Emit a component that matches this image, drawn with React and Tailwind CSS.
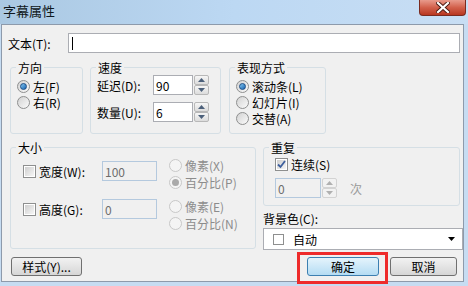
import { useState } from 'react';

const font = "font-['Noto_Sans_CJK_SC',sans-serif]";

function Radio({ checked = false, disabled = false }) {
    return (
        <span
            className={`flex size-[13px] shrink-0 items-center justify-center rounded-full border ${
                disabled
                    ? 'border-[#c8c8c8] bg-[#f4f4f4]'
                    : 'border-[#8e8f8f] bg-gradient-to-br from-[#d2d2d2] to-[#fbfbfb]'
            }`}
        >
            {checked && (
                <span
                    className={`size-[7px] rounded-full ${
                        disabled
                            ? 'bg-[#a9a9a9]'
                            : 'border border-[#1b4c85] bg-gradient-to-br from-[#82c6f0] to-[#1264b0]'
                    }`}
                />
            )}
        </span>
    );
}

function Checkbox({ checked = false }) {
    return (
        <span className="flex size-[13px] shrink-0 items-center justify-center border border-[#8e8f8f] bg-white">
            <span className="relative size-[9px] bg-gradient-to-br from-[#cfcfcf] to-[#f6f6f6]">
                {checked && (
                    <svg viewBox="0 0 9 9" className="absolute inset-0 size-[9px]">
                        <path d="M1 4.5 L3.5 7 L8 1" fill="none" stroke="#3d5f9d" strokeWidth="1.8" />
                    </svg>
                )}
            </span>
        </span>
    );
}

function Spinner({ disabled = false }) {
    const btn = `flex h-[10px] w-[15px] items-center justify-center rounded-[2px] border ${
        disabled ? 'border-[#d3d3d3] bg-[#f2f2f2]' : 'border-[#b8b8b8] bg-gradient-to-b from-[#f6f6f6] to-[#dcdcdc]'
    }`;
    const fill = disabled ? '#b0b0b0' : '#4c607a';
    return (
        <div className="ml-[1px] flex flex-col">
            <span className={btn}>
                <svg width="7" height="4" viewBox="0 0 7 4">
                    <path d="M0 4 L3.5 0 L7 4 Z" fill={fill} />
                </svg>
            </span>
            <span className={btn}>
                <svg width="7" height="4" viewBox="0 0 7 4">
                    <path d="M0 0 L3.5 4 L7 0 Z" fill={fill} />
                </svg>
            </span>
        </div>
    );
}

// group box: border starts at the middle of the caption
function Group({ title, className = '', boxClass = '', children }) {
    return (
        <div className={`relative pt-[6px] ${className}`}>
            <div className={`rounded-[3px] border border-[#d5dfe5] ${boxClass}`}>{children}</div>
            <span className="absolute left-[6px] top-0 bg-[#f0f0f0] px-[2px] leading-[13px]">{title}</span>
        </div>
    );
}

function Button({ children, focused = false, className = '' }) {
    return (
        <button
            className={`h-[19px] rounded-[3px] border text-[12px] leading-[17px] ${
                focused
                    ? 'border-[#3c7fb1] bg-gradient-to-b from-[#e5f4fc] to-[#b4dcf3]'
                    : 'border-[#707070] bg-gradient-to-b from-[#f2f2f2] to-[#d6d6d6]'
            } ${className}`}
        >
            {children}
        </button>
    );
}

export default function App() {
    const [text] = useState('');

    return (
        <div className={`relative flex h-[286px] w-[468px] flex-col overflow-hidden bg-[#c6dcf2] text-black ${font}`}>
            {/* title bar */}
            <div className="flex h-[24px] items-start justify-between bg-gradient-to-r from-[#aac8e2] via-[#bcd8f3] to-[#c8def4]">
                <span className="ml-[3px] mt-[4px] text-[13px] leading-[13px] text-[#101820]">字幕属性</span>
                <span className="mr-[2px] flex h-[16px] w-[47px] items-center justify-center rounded-b-[4px] border border-t-0 border-[#7a2b20] bg-gradient-to-b from-[#e89a8c] via-[#d2604b] to-[#b8361f]">
                    <svg width="14" height="11" viewBox="0 0 14 11">
                        <path d="M2 1 L12 10 M12 1 L2 10" stroke="#4a1a12" strokeWidth="4" strokeLinecap="square" />
                        <path d="M2 1 L12 10 M12 1 L2 10" stroke="#ffffff" strokeWidth="2.2" strokeLinecap="square" />
                    </svg>
                </span>
            </div>

            {/* client area */}
            <div className="ml-[1px] flex h-[258px] w-[463px] flex-col border border-[#8d9aab] bg-[#f0f0f0] text-[12px] leading-[13px]">
                {/* text row */}
                <div className="mt-[8px] flex items-center">
                    <span className="w-[66px] pl-[6px]">文本(T):</span>
                    <div className="flex h-[20px] w-[392px] items-center border border-[#abadb3] bg-white pl-[3px]">
                        {text}
                        <span className="h-[13px] w-[1px] bg-black" />
                    </div>
                </div>

                {/* row 1 */}
                <div className="mt-[8px] flex items-start">
                    <Group title="方向" className="ml-[8px] w-[73px]" boxClass="h-[67px]">
                        <div className="flex flex-col pl-[6px] pt-[10px]">
                            <div className="flex h-[16px] items-center gap-[3px]">
                                <Radio checked />
                                <span>左(F)</span>
                            </div>
                            <div className="flex h-[16px] items-center gap-[3px]">
                                <Radio />
                                <span>右(R)</span>
                            </div>
                        </div>
                    </Group>

                    <Group title="速度" className="ml-[7px] w-[131px]" boxClass="h-[67px]">
                        <div className="flex flex-col gap-[7px] pl-[6px] pt-[7px]">
                            <div className="flex items-center">
                                <span className="w-[56px]">延迟(D):</span>
                                <div className="flex h-[20px] w-[40px] items-center border border-[#abadb3] bg-white pl-[2px]">
                                    90
                                </div>
                                <Spinner />
                            </div>
                            <div className="flex items-center">
                                <span className="w-[56px]">数量(U):</span>
                                <div className="flex h-[20px] w-[40px] items-center border border-[#abadb3] bg-white pl-[2px]">
                                    6
                                </div>
                                <Spinner />
                            </div>
                        </div>
                    </Group>

                    <Group title="表现方式" className="ml-[8px] w-[97px]" boxClass="h-[67px]">
                        <div className="flex flex-col pl-[6px] pt-[10px]">
                            <div className="flex h-[16px] items-center gap-[3px]">
                                <Radio checked />
                                <span>滚动条(L)</span>
                            </div>
                            <div className="flex h-[16px] items-center gap-[3px]">
                                <Radio />
                                <span>幻灯片(I)</span>
                            </div>
                            <div className="flex h-[16px] items-center gap-[3px]">
                                <Radio />
                                <span>交替(A)</span>
                            </div>
                        </div>
                    </Group>
                </div>

                {/* row 2 */}
                <div className="mt-[7px] flex items-start">
                    <Group title="大小" className="ml-[8px] w-[246px]" boxClass="h-[102px]">
                        <div className="flex flex-col gap-[18px] pl-[12px] pt-[13px]">
                            <div className="flex h-[20px] items-start">
                                <div className="flex h-[20px] items-center">
                                    <Checkbox />
                                    <span className="ml-[3px] w-[63px]">宽度(W):</span>
                                    <div className="flex h-[20px] w-[55px] items-center border border-[#b4c9de] bg-[#f0f0f0] pl-[2px] text-[#6d6d6d]">
                                        100
                                    </div>
                                </div>
                                <div className="-mt-[4px] ml-[12px] flex flex-col text-[#8c8c8c]">
                                    <div className="flex h-[17px] items-center gap-[3px]">
                                        <Radio disabled />
                                        <span>像素(X)</span>
                                    </div>
                                    <div className="flex h-[17px] items-center gap-[3px]">
                                        <Radio checked disabled />
                                        <span>百分比(P)</span>
                                    </div>
                                </div>
                            </div>
                            <div className="flex h-[20px] items-start">
                                <div className="flex h-[20px] items-center">
                                    <Checkbox />
                                    <span className="ml-[3px] w-[63px]">高度(G):</span>
                                    <div className="flex h-[20px] w-[55px] items-center border border-[#b4c9de] bg-[#f0f0f0] pl-[2px] text-[#6d6d6d]">
                                        0
                                    </div>
                                </div>
                                <div className="-mt-[1px] ml-[12px] flex flex-col text-[#8c8c8c]">
                                    <div className="flex h-[17px] items-center gap-[3px]">
                                        <Radio disabled />
                                        <span>像素(E)</span>
                                    </div>
                                    <div className="flex h-[16px] items-center gap-[3px]">
                                        <Radio disabled />
                                        <span>百分比(N)</span>
                                    </div>
                                </div>
                            </div>
                        </div>
                    </Group>

                    <div className="ml-[7px] flex w-[200px] flex-col">
                        <Group title="重复" className="w-[197px]" boxClass="h-[59px]">
                            <div className="flex flex-col pl-[11px] pt-[10px]">
                                <div className="flex h-[13px] items-center">
                                    <Checkbox checked />
                                    <span className="ml-[3px]">连续(S)</span>
                                </div>
                                <div className="mt-[7px] flex items-center">
                                    <div className="flex h-[20px] w-[46px] items-center border border-[#b4c9de] bg-[#f0f0f0] pl-[2px] text-[#6d6d6d]">
                                        0
                                    </div>
                                    <Spinner disabled />
                                    <span className="ml-[13px] text-[#9a9a9a]">次</span>
                                </div>
                            </div>
                        </Group>
                        <span className="mt-[6px]">背景色(C):</span>
                        <div className="mt-[3px] flex h-[22px] w-[200px] items-center border border-[#abadb3] bg-white">
                            <span className="ml-[9px] size-[11px] border border-[#8e8f8f] bg-white" />
                            <span className="ml-[9px]">自动</span>
                            <svg className="ml-auto mr-[7px]" width="7" height="4" viewBox="0 0 7 4">
                                <path d="M0 0 L3.5 4 L7 0 Z" fill="#000" />
                            </svg>
                        </div>
                    </div>
                </div>

                {/* buttons */}
                <div className="mt-[7px] flex items-center">
                    <Button className="ml-[9px] w-[71px]">样式(Y)...</Button>
                    <Button focused className="ml-auto w-[72px]">
                        确定
                    </Button>
                    <Button className="ml-[11px] mr-[6px] w-[67px]">取消</Button>
                </div>
            </div>

            {/* red annotation */}
            <div className="absolute left-[297px] top-[252px] h-[32px] w-[91px] border-[3px] border-[#ee2b2b]" />
        </div>
    );
}
